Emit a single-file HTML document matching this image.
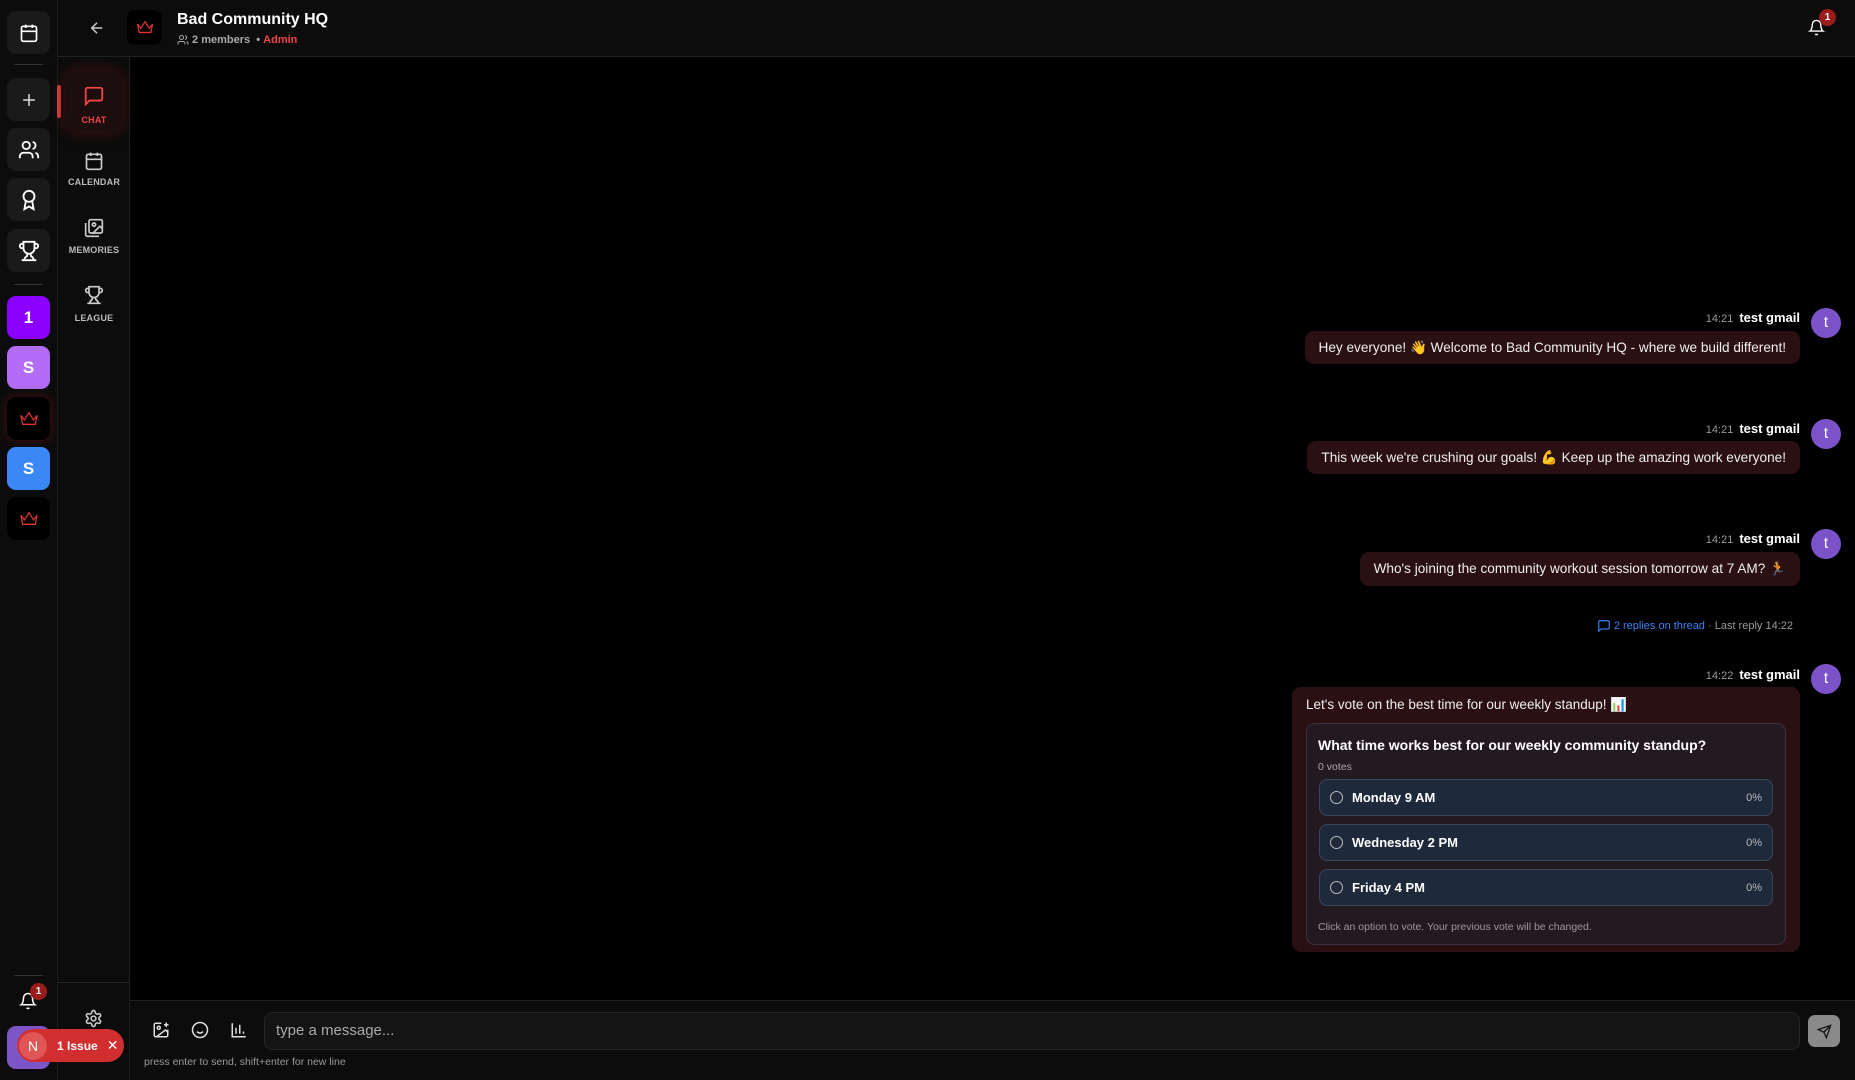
<!DOCTYPE html>
<html><head><meta charset="utf-8"><style>
*{box-sizing:border-box;margin:0;padding:0}
body{width:1855px;height:1080px;background:#000;font-family:"Liberation Sans",sans-serif;color:#fff;position:relative;overflow:hidden}
.a{position:absolute}
.rail{left:0;top:0;width:58px;height:1080px;background:#0c0c0c;border-right:1px solid #1c1c1c}
.rb{position:absolute;left:7px;width:43px;height:43px;border-radius:9px;background:#1a1a1a;display:flex;align-items:center;justify-content:center;font-weight:bold;font-size:17px}
.side{left:58px;top:57px;width:72px;height:1023px;background:#0c0c0c;border-right:1px solid #1f1f1f}
.hdr{left:58px;top:0;width:1797px;height:57px;background:#0c0c0c;border-bottom:1px solid #222}
.tab{position:absolute;left:0;width:72px;text-align:center;font-size:9px;color:#bbb;font-weight:bold;letter-spacing:.2px}
svg{display:block}
.mh{position:absolute;right:55px;font-size:13px;font-weight:bold;text-align:right}
.mh span{font-weight:normal;color:#999;font-size:11px;margin-right:6px}
.av{position:absolute;left:1811px;width:30px;height:30px;border-radius:50%;background:#7b52c8;display:flex;align-items:center;justify-content:center;font-size:16px}
.bub{position:absolute;right:55px;background:#2b1013;border-radius:9px;font-size:13.6px;color:#eee;padding:0 14px;display:flex;align-items:center}
.opt{position:absolute;left:12px;width:454px;height:37px;background:#1e293b;border:1px solid #3a4556;border-radius:8px;font-size:13px;font-weight:bold;display:flex;align-items:center;padding:0 10px}
.opt i{width:13px;height:13px;border:1.5px solid #bbb;border-radius:50%;margin-right:9px}
.opt b{margin-left:auto;font-weight:normal;color:#bbb;font-size:11px}
</style></head><body>
<div class="a rail">
 <div class="rb" style="top:11px"><svg width="20" height="20" viewBox="0 0 24 24" fill="none" stroke="#fff" stroke-width="2"><rect x="3" y="4" width="18" height="18" rx="2"/><path d="M16 2v4M8 2v4M3 10h18"/></svg></div>
 <div class="a" style="left:14px;top:64px;width:29px;height:1px;background:#333"></div>
 <div class="rb" style="top:78px"><svg width="20" height="20" viewBox="0 0 24 24" fill="none" stroke="#ddd" stroke-width="1.8"><path d="M12 5v14M5 12h14"/></svg></div>
 <div class="rb" style="top:128px"><svg width="22" height="22" viewBox="0 0 24 24" fill="none" stroke="#fff" stroke-width="2"><circle cx="9" cy="7" r="4"/><path d="M2 21v-2a4 4 0 0 1 4-4h6a4 4 0 0 1 4 4v2M16 3.1a4 4 0 0 1 0 7.8M22 21v-2a4 4 0 0 0-3-3.9"/></svg></div>
 <div class="rb" style="top:178px"><svg width="22" height="22" viewBox="0 0 24 24" fill="none" stroke="#fff" stroke-width="2"><circle cx="12" cy="8" r="6"/><path d="M15.5 13.5 17 22l-5-3-5 3 1.5-8.5"/></svg></div>
 <div class="rb" style="top:229px"><svg width="22" height="22" viewBox="0 0 24 24" fill="none" stroke="#fff" stroke-width="2"><path d="M6 9H4.5a2.5 2.5 0 0 1 0-5H6M18 9h1.5a2.5 2.5 0 0 0 0-5H18M4 22h16M10 14.7V17c0 .6-.5 1-1 1.2C7.9 18.8 7 20.2 7 22M14 14.7V17c0 .6.5 1 1 1.2 1.1.6 2 2 2 3.8M18 2H6v7a6 6 0 0 0 12 0V2Z"/></svg></div>
 <div class="a" style="left:14px;top:284px;width:29px;height:1px;background:#333"></div>
 <div class="rb" style="top:296px;background:#8b00ff">1</div>
 <div class="rb" style="top:346px;background:#b36cf5">S</div>
 <div class="rb" style="top:397px;background:#000;box-shadow:0 0 10px #4a0f10"><svg width="22" height="18" viewBox="0 0 24 20" fill="none" stroke="#d33" stroke-width="1.4"><path d="M3 6l4 5 5-8 5 8 4-5-2 10H5z"/><path d="M5 16h14"/></svg></div>
 <div class="rb" style="top:447px;background:#3b87f5">S</div>
 <div class="rb" style="top:497px;background:#000"><svg width="22" height="18" viewBox="0 0 24 20" fill="none" stroke="#d33" stroke-width="1.4"><path d="M3 6l4 5 5-8 5 8 4-5-2 10H5z"/><path d="M5 16h14"/></svg></div>
 <div class="a" style="left:14px;top:975px;width:29px;height:1px;background:#333"></div>
 <div class="a" style="left:19px;top:991px"><svg width="18" height="20" viewBox="0 0 24 24" fill="none" stroke="#fff" stroke-width="2"><path d="M6 8a6 6 0 0 1 12 0c0 7 3 9 3 9H3s3-2 3-9M10.3 21a1.9 1.9 0 0 0 3.4 0"/></svg></div>
 <div class="a" style="left:30px;top:983px;width:17px;height:17px;border-radius:50%;background:#9b1c1c;font-size:10px;font-weight:bold;display:flex;align-items:center;justify-content:center">1</div>
 <div class="rb" style="top:1026px;background:#7d55c7"></div>
</div>

<div class="a hdr">
 <div class="a" style="left:30px;top:19px"><svg width="18" height="18" viewBox="0 0 24 24" fill="none" stroke="#ccc" stroke-width="2"><path d="M19 12H5M12 19l-7-7 7-7"/></svg></div>
 <div class="a" style="left:69px;top:10px;width:35px;height:35px;border-radius:8px;background:#000;display:flex;align-items:center;justify-content:center"><svg width="20" height="17" viewBox="0 0 24 20" fill="none" stroke="#d33" stroke-width="1.5"><path d="M3 6l4 5 5-8 5 8 4-5-2 10H5z"/><path d="M5 16h14"/></svg></div>
 <div class="a" style="left:119px;top:11px;font-size:16px;font-weight:bold">Bad Community HQ</div>
 <div class="a" style="left:119px;top:34px;font-size:11px;color:#aaa;font-weight:bold;display:flex;align-items:center"><svg width="12" height="12" viewBox="0 0 24 24" fill="none" stroke="#aaa" stroke-width="2"><circle cx="9" cy="7" r="4"/><path d="M2 21v-2a4 4 0 0 1 4-4h6a4 4 0 0 1 4 4v2M16 3.1a4 4 0 0 1 0 7.8M22 21v-2a4 4 0 0 0-3-3.9"/></svg>&nbsp;2 members &nbsp;•&nbsp; <span style="color:#ef4444">Admin</span></div>
 <div class="a" style="left:1750px;top:18px"><svg width="17" height="19" viewBox="0 0 24 24" fill="none" stroke="#fff" stroke-width="2"><path d="M6 8a6 6 0 0 1 12 0c0 7 3 9 3 9H3s3-2 3-9M10.3 21a1.9 1.9 0 0 0 3.4 0"/></svg></div>
 <div class="a" style="left:1761px;top:9px;width:17px;height:17px;border-radius:50%;background:#9b1c1c;font-size:10px;font-weight:bold;display:flex;align-items:center;justify-content:center">1</div>
</div>

<div class="a side">
 <div class="a" style="left:-1px;top:28px;width:4px;height:33px;background:#e0453f;border-radius:2px"></div>
 <div class="a" style="left:7px;top:14px;width:57px;height:61px;border-radius:10px;background:#1c0d0e;box-shadow:0 0 14px #4a1010"></div>
 <div class="a" style="left:25px;top:28px"><svg width="22" height="22" viewBox="0 0 24 24" fill="none" stroke="#ef4444" stroke-width="2"><path d="M21 15a2 2 0 0 1-2 2H7l-4 4V5a2 2 0 0 1 2-2h14a2 2 0 0 1 2 2z"/></svg></div>
 <div class="tab" style="top:58px;color:#ef4444">CHAT</div>
 <div class="a" style="left:26px;top:94px"><svg width="20" height="20" viewBox="0 0 24 24" fill="none" stroke="#ccc" stroke-width="2"><rect x="3" y="4" width="18" height="18" rx="2"/><path d="M16 2v4M8 2v4M3 10h18"/></svg></div>
 <div class="tab" style="top:120px">CALENDAR</div>
 <div class="a" style="left:26px;top:161px"><svg width="20" height="20" viewBox="0 0 24 24" fill="none" stroke="#ccc" stroke-width="2"><path d="M18 22H4a2 2 0 0 1-2-2V6"/><rect x="6" y="2" width="16" height="16" rx="2"/><circle cx="12" cy="8" r="2"/><path d="m22 13-3-3-9 9"/></svg></div>
 <div class="tab" style="top:188px">MEMORIES</div>
 <div class="a" style="left:26px;top:228px"><svg width="20" height="20" viewBox="0 0 24 24" fill="none" stroke="#ccc" stroke-width="2"><path d="M6 9H4.5a2.5 2.5 0 0 1 0-5H6M18 9h1.5a2.5 2.5 0 0 0 0-5H18M4 22h16M10 14.7V17c0 .6-.5 1-1 1.2C7.9 18.8 7 20.2 7 22M14 14.7V17c0 .6.5 1 1 1.2 1.1.6 2 2 2 3.8M18 2H6v7a6 6 0 0 0 12 0V2Z"/></svg></div>
 <div class="tab" style="top:256px">LEAGUE</div>
 <div class="a" style="left:0;top:925px;width:72px;height:1px;background:#222"></div>
 <div class="a" style="left:26px;top:952px"><svg width="19" height="19" viewBox="0 0 24 24" fill="none" stroke="#ccc" stroke-width="2"><circle cx="12" cy="12" r="3"/><path d="M12.2 2h-.4a2 2 0 0 0-2 2v.2a2 2 0 0 1-1 1.7l-.4.3a2 2 0 0 1-2 0l-.2-.1a2 2 0 0 0-2.7.7l-.2.4a2 2 0 0 0 .7 2.7l.2.1a2 2 0 0 1 1 1.7v.5a2 2 0 0 1-1 1.8l-.2.1a2 2 0 0 0-.7 2.7l.2.4a2 2 0 0 0 2.7.7l.2-.1a2 2 0 0 1 2 0l.4.3a2 2 0 0 1 1 1.7v.2a2 2 0 0 0 2 2h.4a2 2 0 0 0 2-2v-.2a2 2 0 0 1 1-1.7l.4-.3a2 2 0 0 1 2 0l.2.1a2 2 0 0 0 2.7-.7l.2-.4a2 2 0 0 0-.7-2.7l-.2-.1a2 2 0 0 1-1-1.8v-.5a2 2 0 0 1 1-1.7l.2-.1a2 2 0 0 0 .7-2.7l-.2-.4a2 2 0 0 0-2.7-.7l-.2.1a2 2 0 0 1-2 0l-.4-.3a2 2 0 0 1-1-1.7V4a2 2 0 0 0-2-2z"/></svg></div>
</div>

<div class="a" style="left:17px;top:1029px;width:107px;height:33px;border-radius:17px;background:#d12f2f;display:flex;align-items:center;font-size:12px;font-weight:bold;z-index:10">
 <div style="width:28px;height:28px;border-radius:50%;background:#e05555;margin-left:2px;display:flex;align-items:center;justify-content:center;font-size:14px;font-weight:normal">N</div>
 <span style="margin-left:10px">1 Issue</span><span style="margin-left:9px;font-size:14px;font-weight:normal">✕</span></div>

<!-- messages -->
<div class="mh" style="top:310px"><span>14:21</span>test gmail</div>
<div class="av" style="top:308px">t</div>
<div class="bub" style="top:331px;height:33px">Hey everyone! 👋 Welcome to Bad Community HQ - where we build different!</div>

<div class="mh" style="top:421px"><span>14:21</span>test gmail</div>
<div class="av" style="top:419px">t</div>
<div class="bub" style="top:441px;height:33px">This week we're crushing our goals! 💪 Keep up the amazing work everyone!</div>

<div class="mh" style="top:531px"><span>14:21</span>test gmail</div>
<div class="av" style="top:529px">t</div>
<div class="bub" style="top:552px;height:34px">Who's joining the community workout session tomorrow at 7 AM? 🏃</div>

<div class="a" style="right:62px;top:619px;font-size:11px;color:#999;display:flex;align-items:center"><svg width="14" height="14" viewBox="0 0 24 24" fill="none" stroke="#3b82f6" stroke-width="2"><path d="M21 15a2 2 0 0 1-2 2H7l-4 4V5a2 2 0 0 1 2-2h14a2 2 0 0 1 2 2z"/></svg>&nbsp;<span style="color:#3b82f6">2 replies on thread</span>&nbsp;· Last reply 14:22</div>

<div class="mh" style="top:667px"><span>14:22</span>test gmail</div>
<div class="av" style="top:664px">t</div>
<div class="a" style="left:1292px;top:687px;width:508px;height:265px;background:#2b1013;border-radius:9px">
 <div class="a" style="left:14px;top:10px;font-size:13.5px;color:#eee">Let's vote on the best time for our weekly standup! 📊</div>
 <div class="a" style="left:14px;top:36px;width:480px;height:222px;background:#231a21;border:1px solid #3a3440;border-radius:9px">
  <div class="a" style="left:11px;top:13px;font-size:14px;font-weight:bold">What time works best for our weekly community standup?</div>
  <div class="a" style="left:11px;top:37px;font-size:10.5px;color:#aaa">0 votes</div>
  <div class="opt" style="top:55px"><i></i>Monday 9 AM<b>0%</b></div>
  <div class="opt" style="top:100px"><i></i>Wednesday 2 PM<b>0%</b></div>
  <div class="opt" style="top:145px"><i></i>Friday 4 PM<b>0%</b></div>
  <div class="a" style="left:11px;top:197px;font-size:10.5px;color:#999">Click an option to vote. Your previous vote will be changed.</div>
 </div>
</div>

<!-- composer -->
<div class="a" style="left:130px;top:1000px;width:1725px;height:80px;background:#0c0c0c;border-top:1px solid #222"></div>
<div class="a" style="left:152px;top:1021px"><svg width="18" height="18" viewBox="0 0 24 24" fill="none" stroke="#ddd" stroke-width="2"><path d="M16 5h6M19 2v6M21 11.5V19a2 2 0 0 1-2 2H5a2 2 0 0 1-2-2V5a2 2 0 0 1 2-2h7.5"/><path d="m21 15-3-3L6 21"/><circle cx="9" cy="9" r="2"/></svg></div>
<div class="a" style="left:191px;top:1021px"><svg width="18" height="18" viewBox="0 0 24 24" fill="none" stroke="#ddd" stroke-width="2"><circle cx="12" cy="12" r="10"/><path d="M8 14s1.5 2 4 2 4-2 4-2M9 9h.01M15 9h.01"/></svg></div>
<div class="a" style="left:230px;top:1021px"><svg width="18" height="18" viewBox="0 0 24 24" fill="none" stroke="#ddd" stroke-width="2"><path d="M3 3v18h18M8 17V9M13 17V5M18 17v-3"/></svg></div>
<div class="a" style="left:264px;top:1012px;width:1536px;height:38px;background:#141414;border:1px solid #262626;border-radius:8px;font-size:15px;color:#aaa;padding:9px 11px">type a message...</div>
<div class="a" style="left:1808px;top:1015px;width:32px;height:32px;border-radius:7px;background:#8a8a8a;display:flex;align-items:center;justify-content:center"><svg width="15" height="15" viewBox="0 0 24 24" fill="none" stroke="#111" stroke-width="2"><path d="M22 2 11 13M22 2l-7 20-4-9-9-4z"/></svg></div>
<div class="a" style="left:144px;top:1056px;font-size:10.5px;color:#999">press enter to send, shift+enter for new line</div>
</body></html>
